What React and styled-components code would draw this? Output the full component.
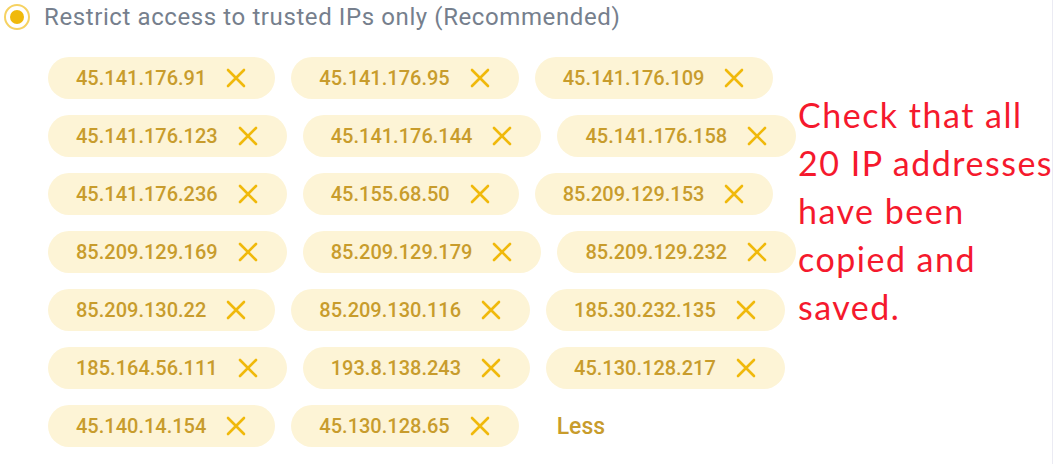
import React from 'react';
import styled, { createGlobalStyle } from 'styled-components';

const GlobalStyle = createGlobalStyle`
    body {
        margin: 0;
        background: #fff;
        font-family: Roboto, "Liberation Sans", sans-serif;
    }
`;

const Page = styled.div`
    width: 1053px;
    height: 464px;
    box-sizing: border-box;
    border-right: 1px solid #ebebf3;
    overflow: hidden;
`;

const Option = styled.label`
    display: flex;
    align-items: center;
    gap: 14px;
    height: 34px;
    padding-left: 4px;
    color: #767f8d;
    font-size: 24px;
    letter-spacing: 0.6px;
`;

const Radio = styled.span`
    width: 26px;
    height: 26px;
    box-sizing: border-box;
    border-radius: 50%;
    border: 2px solid #f6d262;
    display: flex;
    align-items: center;
    justify-content: center;
    &::after {
        content: '';
        width: 14px;
        height: 14px;
        border-radius: 50%;
        background: #f0b90b;
    }
`;

const Body = styled.div`
    display: grid;
    grid-template-columns: 750px 1fr;
    padding: 23px 0 0 48px;
`;

const Rows = styled.div`
    display: flex;
    flex-direction: column;
    gap: 16px;
`;

const Row = styled.div`
    display: flex;
    align-items: center;
    gap: 16px;
`;

const Chip = styled.span`
    display: inline-flex;
    align-items: center;
    gap: 20px;
    height: 42px;
    padding: 0 29px 0 28px;
    border-radius: 21px;
    background: #fdf4d6;
    color: #c89c2c;
    font-size: 20px;
    font-weight: 500;
`;

const Remove = styled.svg`
    width: 20px;
    height: 20px;
    stroke: #f0b90b;
    stroke-width: 2.6;
    stroke-linecap: round;
    flex-shrink: 0;
`;

const Less = styled.span`
    margin-left: 22px;
    color: #c89c2c;
    font-size: 23px;
    font-weight: 500;
`;

const Note = styled.p`
    margin: 34px 0 0 0;
    color: #f5192d;
    font-family: Lato, "Open Sans", sans-serif;
    font-size: 34px;
    letter-spacing: 1.5px;
    line-height: 48px;
    white-space: nowrap;
`;

const rows = [
    ['45.141.176.91', '45.141.176.95', '45.141.176.109'],
    ['45.141.176.123', '45.141.176.144', '45.141.176.158'],
    ['45.141.176.236', '45.155.68.50', '85.209.129.153'],
    ['85.209.129.169', '85.209.129.179', '85.209.129.232'],
    ['85.209.130.22', '85.209.130.116', '185.30.232.135'],
    ['185.164.56.111', '193.8.138.243', '45.130.128.217'],
    ['45.140.14.154', '45.130.128.65'],
];

const IpChip = ({ ip }) => (
    <Chip>
        {ip}
        <Remove viewBox="0 0 20 20" fill="none">
            <path d="M2 2L18 18M18 2L2 18" />
        </Remove>
    </Chip>
);

const App = () => (
    <Page>
        <GlobalStyle />
        <Option>
            <Radio />
            Restrict access to trusted IPs only (Recommended)
        </Option>
        <Body>
            <Rows>
                {rows.map((row, i) => (
                    <Row key={i}>
                        {row.map(ip => <IpChip key={ip} ip={ip} />)}
                        {i === rows.length - 1 && <Less>Less</Less>}
                    </Row>
                ))}
            </Rows>
            <Note>
                Check that all<br />
                20 IP addresses<br />
                have been<br />
                copied and<br />
                saved.
            </Note>
        </Body>
    </Page>
);

export default App;
